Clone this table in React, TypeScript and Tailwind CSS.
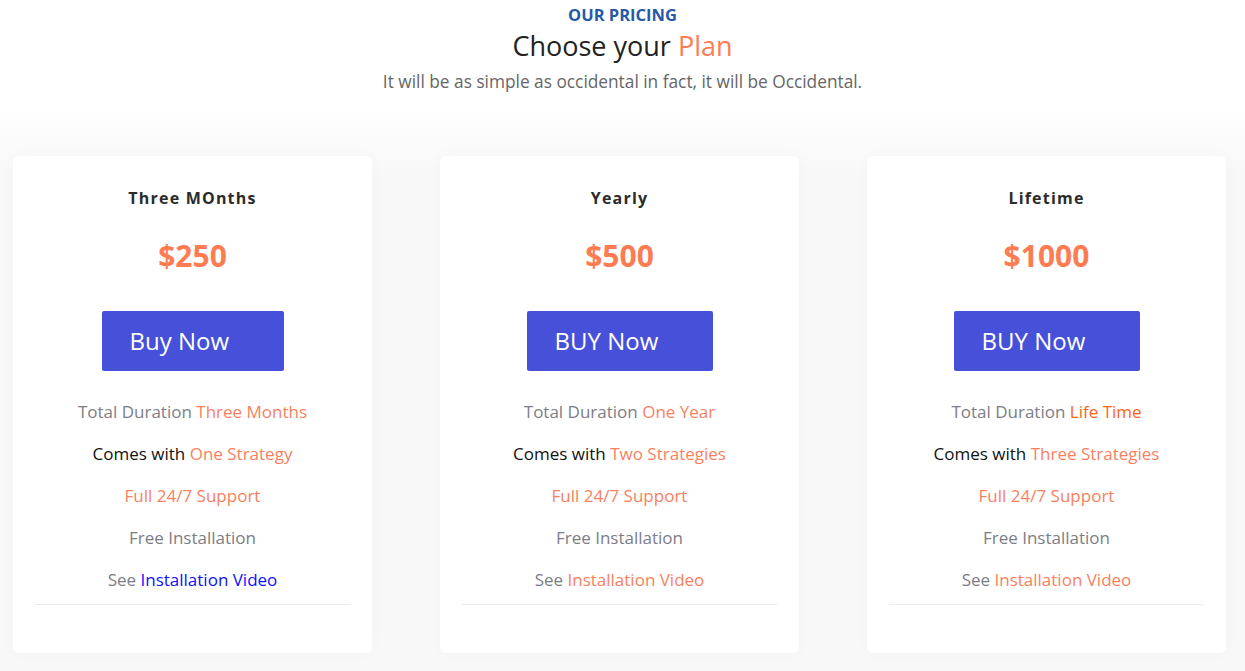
import React from "react";

type Plan = {
  title: string;
  price: string;
  button: string;
  btnWidth: string;
  duration: string;
  durationColor: string;
  strategies: string;
  videoColor: string;
};

const plans: Plan[] = [
  {
    title: "Three MOnths",
    price: "$250",
    button: "Buy Now",
    btnWidth: "w-[182px]",
    duration: "Three Months",
    durationColor: "text-[#fa7f5f]",
    strategies: "One Strategy",
    videoColor: "text-[#1010ff]",
  },
  {
    title: "Yearly",
    price: "$500",
    button: "BUY Now",
    btnWidth: "w-[186px]",
    duration: "One Year",
    durationColor: "text-[#fa7f5f]",
    strategies: "Two Strategies",
    videoColor: "text-[#fa7f5f]",
  },
  {
    title: "Lifetime",
    price: "$1000",
    button: "BUY Now",
    btnWidth: "w-[186px]",
    duration: "Life Time",
    durationColor: "text-[#ff6414]",
    strategies: "Three Strategies",
    videoColor: "text-[#fa7f5f]",
  },
];

const PlanCard = ({ plan }: { plan: Plan }) => (
  <div className="w-[359px] h-[497px] bg-white rounded-[6px] shadow-[0_0_18px_rgba(0,0,0,0.025)] flex flex-col items-center pt-[31px] px-[22px]">
    <h3 className="text-[16px] font-bold tracking-[1.2px] text-[#2b2b2b] leading-[22px]">{plan.title}</h3>
    <div className="mt-[27px] text-[30px] font-bold text-[#ff7b52] leading-[40px]">{plan.price}</div>
    <button
      className={`mt-[35px] h-[60px] ${plan.btnWidth} bg-[#4650d9] rounded-[2px] text-white text-[24px] text-left pl-[28px]`}
    >
      {plan.button}
    </button>
    <ul className="mt-[31px] w-full flex flex-col items-center text-[17px] leading-[20px] gap-[22px]">
      <li>
        <span className="text-[#7d7d86]">Total Duration </span>
        <span className={plan.durationColor}>{plan.duration}</span>
      </li>
      <li>
        <span className="text-[#111]">Comes with </span>
        <span className="text-[#fa7f5f]">{plan.strategies}</span>
      </li>
      <li className="text-[#fa7f5f]">Full 24/7 Support</li>
      <li className="text-[#7d7d86]">Free Installation</li>
      <li>
        <span className="text-[#7d7d86]">See </span>
        <span className={plan.videoColor}>Installation Video</span>
      </li>
    </ul>
    <div className="mt-[14px] w-full h-px bg-[#ebebeb]" />
  </div>
);

export default function App() {
  return (
    <div
      className="w-[1245px] h-[671px] bg-white overflow-hidden"
      style={{ fontFamily: '"Open Sans", sans-serif' }}
    >
      <header className="flex flex-col items-center pt-[5px]">
        <div className="text-[16.5px] font-bold text-[#2559a8] leading-[20px]">OUR PRICING</div>
        <h2 className="mt-[5px] text-[27px] text-[#222] leading-[32px]">
          Choose your <span className="text-[#ff7b52]">Plan</span>
        </h2>
        <p className="mt-[10px] text-[17.3px] text-[#666] leading-[20px]">
          It will be as simple as occidental in fact, it will be Occidental.
        </p>
      </header>
      <section className="mt-[12px] h-[600px] bg-gradient-to-b from-white to-[#f8f8f8] to-[70px]">
        <div className="pt-[52px] pl-[13px] flex gap-[68px]">
          {plans.map((p) => (
            <PlanCard key={p.title} plan={p} />
          ))}
        </div>
      </section>
    </div>
  );
}
